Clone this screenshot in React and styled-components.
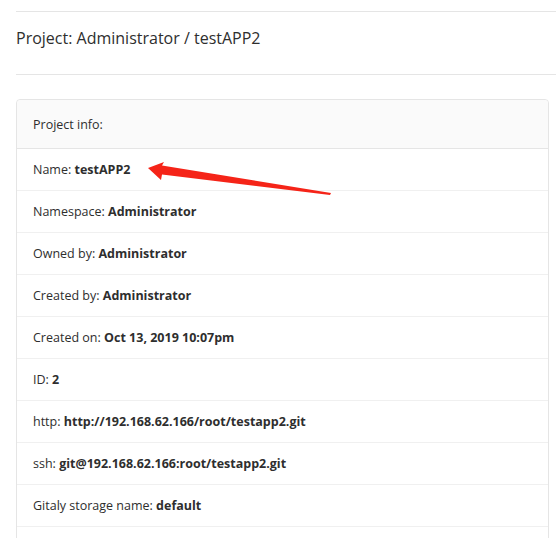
import React from "react";
import styled, { createGlobalStyle } from "styled-components";

const GlobalStyle = createGlobalStyle`
  body {
    margin: 0;
    background: #fff;
    font-family: "Open Sans", "Noto Sans", sans-serif;
    color: #2e2e2e;
    overflow: hidden;
  }
`;

const Page = styled.div`
  padding: 11px 0 0 16px;
`;

const Title = styled.h3`
  margin: 0;
  height: 64px;
  box-sizing: border-box;
  padding-bottom: 10px;
  display: flex;
  align-items: center;
  border-top: 1px solid #e5e5e5;
  border-bottom: 1px solid #e5e5e5;
  font-size: 16px;
  font-weight: 400;
  color: #2e2e2e;
`;

const Card = styled.div`
  margin: 24px 7px 0 0;
  border: 1px solid #e5e5e5;
  border-radius: 4px;
  position: relative;
`;

const CardHeader = styled.div`
  height: 48px;
  display: flex;
  align-items: center;
  padding: 0 16px;
  background: #fafafa;
  border-bottom: 1px solid #e5e5e5;
  border-radius: 4px 4px 0 0;
  font-size: 12.5px;
`;

const Row = styled.div`
  height: 41px;
  display: flex;
  align-items: center;
  padding: 0 16px;
  border-bottom: 1px solid #f0f0f0;
  font-size: 12.5px;
  white-space: pre;
`;

const Value = styled.strong`
  font-weight: 700;
`;

const Arrow = styled.svg`
  position: absolute;
  left: 0;
  top: 0;
  pointer-events: none;
`;

const rows = [
  ["Name", "testAPP2"],
  ["Namespace", "Administrator"],
  ["Owned by", "Administrator"],
  ["Created by", "Administrator"],
  ["Created on", "Oct 13, 2019 10:07pm"],
  ["ID", "2"],
  ["http", "http://192.168.62.166/root/testapp2.git"],
  ["ssh", "git@192.168.62.166:root/testapp2.git"],
  ["Gitaly storage name", "default"],
  ["", ""],
];

const App = () => (
  <>
    <GlobalStyle />
    <Page>
      <Title>Project: Administrator / testAPP2</Title>
      <Card>
        <CardHeader>Project info:</CardHeader>
        {rows.map(([label, value], i) => (
          <Row key={i}>
            {label && (
              <>
                {label}: <Value>{value}</Value>
              </>
            )}
          </Row>
        ))}
        <Arrow width="340" height="120" viewBox="0 0 340 120">
          <path
            d="M131 68 L147 62 L145 65.5 L314 93 L313 95 L145 74.5 L144 80 Z"
            fill="#f52418"
          />
        </Arrow>
      </Card>
    </Page>
  </>
);

export default App;
